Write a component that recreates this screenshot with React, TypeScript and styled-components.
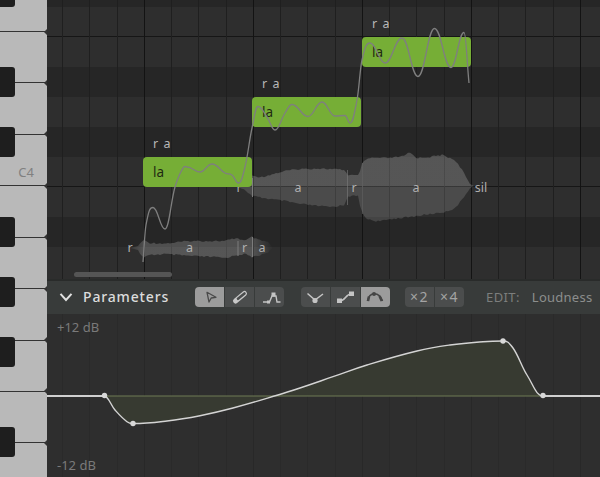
import React from "react";
import styled, { createGlobalStyle } from "styled-components";

type Pt = [number, number];

const PITCH: Pt[] = [
  [143, 262], [146, 225], [153, 207.5], [165, 229], [175, 187], [183, 168], [187, 167], [200, 172],
  [212, 164], [225, 173], [232, 175], [238.5, 183], [245, 167], [252, 128], [258, 106.5], [267, 117], [275, 130],
  [285, 113], [292, 104.5], [308, 116.5], [322, 102], [335, 116], [345, 115.5], [350, 123], [357, 100], [362, 60],
  [370, 43], [385, 63], [402, 38], [418, 76.5], [434.5, 28.5], [451, 67.5], [464, 32.5], [469, 83],
];

const LOUDNESS: Pt[] = [
  [47, 396], [104, 396], [115, 410], [127, 421.7], [133, 423.5], [167, 421], [200, 415.7], [233, 408], [278, 395],
  [300, 388], [333, 376.7], [367, 365], [417, 351], [450, 345], [483, 341.7], [503, 341], [513, 348],
  [527, 375], [543, 396], [600, 396],
];

const WAVE_LOW_TOP: Pt[] = [
  [130, 248], [138, 246], [143, 240], [150, 243], [165, 243.5], [190, 241], [215, 241], [225, 241],
  [237, 238], [245, 241], [252, 237], [258, 240], [268, 242], [273, 248],
];
const WAVE_LOW_BOTTOM: Pt[] = [
  [130, 248], [138, 250], [143, 258], [150, 255], [165, 254], [190, 256], [215, 257], [225, 258],
  [237, 255], [245, 254], [252, 257], [258, 256], [268, 252], [273, 248],
];

const WAVE_HIGH_TOP: Pt[] = [
  [238, 186], [245, 183], [250, 178], [252, 176], [262, 177], [285, 171], [300, 169], [320, 168.5],
  [345, 170], [347, 175], [358, 175.5], [360, 172], [362, 163], [370, 158], [390, 158], [405, 156],
  [409, 152], [417, 158], [430, 157], [442, 155], [455, 160], [462, 170], [470, 184], [474, 186],
];
const WAVE_HIGH_BOTTOM: Pt[] = [
  [238, 187], [245, 190], [252, 196], [270, 199], [285, 201], [300, 204], [330, 207], [345, 205],
  [347, 196], [358, 196], [360, 205], [362, 212], [365, 218], [375, 221], [382, 221], [390, 219],
  [410, 217], [430, 214], [445, 212], [455, 208], [462, 200], [470, 188], [474, 186],
];

// hermite through the points, flat on the peaks so it doesn't overshoot them
const smooth = (pts: Pt[]) => {
  const slope = (i: number) => {
    const a = pts[Math.max(i - 1, 0)];
    const b = pts[Math.min(i + 1, pts.length - 1)];
    const c = pts[i];
    if ((c[1] - a[1]) * (b[1] - c[1]) <= 0 && i > 0 && i < pts.length - 1) return 0;
    return (b[1] - a[1]) / (b[0] - a[0]);
  };
  let d = `M${pts[0][0]} ${pts[0][1]}`;
  for (let i = 0; i < pts.length - 1; i++) {
    const p = pts[i];
    const q = pts[i + 1];
    const h = (q[0] - p[0]) * 0.42;
    d += ` C${p[0] + h} ${p[1] + slope(i) * h} ${q[0] - h} ${q[1] - slope(i + 1) * h} ${q[0]} ${q[1]}`;
  }
  return d;
};

const lerpAt = (pts: Pt[], x: number) => {
  for (let i = 0; i < pts.length - 1; i++) {
    if (x <= pts[i + 1][0]) {
      const t = (x - pts[i][0]) / (pts[i + 1][0] - pts[i][0]);
      return pts[i][1] + (pts[i + 1][1] - pts[i][1]) * t;
    }
  }
  return pts[pts.length - 1][1];
};

const jag = (i: number) => {
  const v = Math.sin(i * 12.9898) * 43758.5453;
  return v - Math.floor(v) - 0.5;
};

const wavePath = (top: Pt[], bottom: Pt[]) => {
  const start = top[0][0];
  const end = top[top.length - 1][0];
  const up: string[] = [];
  const down: string[] = [];
  let i = 0;
  for (let x = start; x <= end; x += 2, i++) {
    const amp = Math.min(1, (lerpAt(bottom, x) - lerpAt(top, x)) / 10);
    up.push(`${x} ${(lerpAt(top, x) + jag(i) * 1.6 * amp).toFixed(1)}`);
    down.unshift(`${x} ${(lerpAt(bottom, x) + jag(i + 40) * 1.6 * amp).toFixed(1)}`);
  }
  return `M${up.join(" L")} L${down.join(" L")} Z`;
};

const ROWS = [
  { h: 7, dark: true },
  { h: 30, line: true },
  { h: 30 },
  { h: 30, dark: true },
  { h: 30 },
  { h: 30, dark: true },
  { h: 30, line: true },
  { h: 30 },
  { h: 30, dark: true },
  { h: 32 },
];

const BEATS = Array.from({ length: 20 }, (_, i) => i);

const BeatGrid: React.FC<{ $beat: string; $bar: string }> = ({ $beat, $bar }) => (
  <GridLayer>
    {BEATS.map((i) => (
      <Beat key={i} $color={i % 4 === 3 ? $bar : $beat} />
    ))}
  </GridLayer>
);

const App: React.FC = () => {
  return (
    <Page>
      <GlobalStyle />
      <Piano>
        <WhiteKey $short />
        <WhiteKey />
        <WhiteKey />
        <WhiteKey>
          <KeyName>C4</KeyName>
        </WhiteKey>
        <WhiteKey />
        <WhiteKey />
        <WhiteKey />
        <WhiteKey />
        <WhiteKey />
        <BlackKey $top={-23} />
        <BlackKey $top={67} />
        <BlackKey $top={127} />
        <BlackKey $top={217} />
        <BlackKey $top={277} />
        <BlackKey $top={337} />
        <BlackKey $top={427} />
      </Piano>
      <Main>
        <Roll>
          {ROWS.map((r, i) => (
            <Row key={i} $h={r.h} $dark={r.dark} $line={r.line} />
          ))}
          <BeatGrid $beat="#1f1f1f" $bar="#131313" />

          <Canvas viewBox="47 0 553 279">
            <defs>
              <linearGradient id="lowWave" gradientUnits="userSpaceOnUse" x1="130" x2="273" y1="0" y2="0">
                <stop offset="0" stopColor="#fff" stopOpacity="0.05" />
                <stop offset="0.1" stopColor="#fff" stopOpacity="0.19" />
                <stop offset="0.85" stopColor="#fff" stopOpacity="0.19" />
                <stop offset="1" stopColor="#fff" stopOpacity="0" />
              </linearGradient>
              <linearGradient id="highWave" gradientUnits="userSpaceOnUse" x1="0" x2="0" y1="150" y2="225">
                <stop offset="0" stopColor="#fff" stopOpacity="0.19" />
                <stop offset="0.48" stopColor="#fff" stopOpacity="0.19" />
                <stop offset="0.48" stopColor="#fff" stopOpacity="0.14" />
                <stop offset="1" stopColor="#fff" stopOpacity="0.14" />
              </linearGradient>
            </defs>
            <path d={wavePath(WAVE_LOW_TOP, WAVE_LOW_BOTTOM)} fill="url(#lowWave)" />
            <path d={wavePath(WAVE_HIGH_TOP, WAVE_HIGH_BOTTOM)} fill="url(#highWave)" />
            <g stroke="#7c7c7c" strokeWidth="1">
              <line x1="238" x2="238" y1="241" y2="256" />
              <line x1="252.5" x2="252.5" y1="237" y2="257" />
              <line x1="252.5" x2="252.5" y1="178" y2="197" />
              <line x1="347.5" x2="347.5" y1="170" y2="205" opacity="0.6" />
              <line x1="362.5" x2="362.5" y1="163" y2="214" opacity="0.5" />
            </g>
          </Canvas>

          <Phoneme $x={130} $y={248}>r</Phoneme>
          <Phoneme $x={189.5} $y={248}>a</Phoneme>
          <Phoneme $x={244.5} $y={248}>r</Phoneme>
          <Phoneme $x={262} $y={248}>a</Phoneme>
          <Phoneme $x={239} $y={188}>r</Phoneme>
          <Phoneme $x={298} $y={187.5}>a</Phoneme>
          <Phoneme $x={354} $y={187.5}>r</Phoneme>
          <Phoneme $x={416} $y={187.5}>a</Phoneme>
          <Phoneme $x={481} $y={187.5}>sil</Phoneme>

          <Note $x={143} $y={157}>
            <Lyric>la</Lyric>
            <Syllables>r a</Syllables>
          </Note>
          <Note $x={252} $y={97}>
            <Lyric>la</Lyric>
            <Syllables>r a</Syllables>
          </Note>
          <Note $x={362} $y={37}>
            <Lyric>la</Lyric>
            <Syllables>r a</Syllables>
          </Note>

          <Canvas viewBox="47 0 553 279">
            <path d={smooth(PITCH)} fill="none" stroke="#7f7f7f" strokeWidth="1.3" />
          </Canvas>

          <ScrollThumb />
        </Roll>

        <Toolbar>
          <Chevron viewBox="0 0 14 10">
            <path d="M1.5 1.8 7 8 12.5 1.8" fill="none" stroke="#e0e0e0" strokeWidth="2" />
          </Chevron>
          <PanelTitle>Parameters</PanelTitle>
          <ButtonGroup $width={89}>
            <ToolButton $active>
              <svg viewBox="0 0 29 20">
                <path d="M12 5.3 21 10.3 16.2 11 14 15Z" fill="none" stroke="#4a4a4a" strokeWidth="1.3" strokeLinejoin="round" />
              </svg>
            </ToolButton>
            <ToolButton>
              <svg viewBox="0 0 29 20">
                <path d="M10.5 14 19.5 6.5" stroke="#c8c8c8" strokeWidth="5" strokeLinecap="round" />
                <path d="M13 11.8 19.5 6.5" stroke="#4b4d4d" strokeWidth="2.6" strokeLinecap="round" />
              </svg>
            </ToolButton>
            <ToolButton>
              <svg viewBox="0 0 29 20">
                <path d="M8 15H14.5L17 9H21L22 15H25.5" fill="none" stroke="#c4c4c4" strokeWidth="1.4" />
                <rect x="16.5" y="5.5" width="4" height="4" fill="#c4c4c4" />
                <rect x="12" y="13.5" width="3" height="3" fill="#c4c4c4" />
              </svg>
            </ToolButton>
          </ButtonGroup>
          <ButtonGroup $width={89} $gap={17}>
            <ToolButton>
              <svg viewBox="0 0 29 20">
                <path d="M6.5 6.5 14 13 22 7" fill="none" stroke="#c4c4c4" strokeWidth="1.5" />
                <circle cx="14" cy="13.5" r="2.6" fill="#c4c4c4" />
              </svg>
            </ToolButton>
            <ToolButton>
              <svg viewBox="0 0 29 20">
                <path d="M9 14C14 14 15 7 20 7" fill="none" stroke="#c4c4c4" strokeWidth="1.6" />
                <rect x="6" y="11.5" width="5" height="4.5" fill="#c4c4c4" />
                <rect x="18" y="4.5" width="5" height="4.5" fill="#c4c4c4" />
              </svg>
            </ToolButton>
            <ToolButton $active>
              <svg viewBox="0 0 29 20">
                <path d="M6.5 14C7.5 8.5 10 6.8 13.5 6.8S19.5 8.5 21.5 14" fill="none" stroke="#454545" strokeWidth="1.5" />
                <path d="M7 14 8 9.5M20.8 14 18.5 9" stroke="#454545" strokeWidth="2.6" />
                <circle cx="13" cy="7" r="2" fill="#454545" />
              </svg>
            </ToolButton>
          </ButtonGroup>
          <ButtonGroup $width={59} $gap={15}>
            <ToolButton>
              <Multiplier>×2</Multiplier>
            </ToolButton>
            <ToolButton>
              <Multiplier>×4</Multiplier>
            </ToolButton>
          </ButtonGroup>
          <EditLabel>EDIT:</EditLabel>
          <EditValue>Loudness</EditValue>
        </Toolbar>

        <Params>
          <BeatGrid $beat="#2a2a2a" $bar="#282828" />
          <Canvas viewBox="47 314 553 163">
            <path d={`${smooth(LOUDNESS)} Z`} fill="#373a31" />
            <line x1="104" x2="543" y1="396" y2="396" stroke="#6f7a55" strokeWidth="1.2" />
            <line x1="47" x2="104" y1="396" y2="396" stroke="#c4c4c4" strokeWidth="1.8" />
            <line x1="543" x2="600" y1="396" y2="396" stroke="#c4c4c4" strokeWidth="1.8" />
            <path d={smooth(LOUDNESS)} fill="none" stroke="#d4d4d4" strokeWidth="1.4" />
            <g fill="#d8d8d8">
              <circle cx="104.5" cy="395.5" r="2.7" />
              <circle cx="133" cy="423.5" r="2.7" />
              <circle cx="503" cy="341" r="2.7" />
              <circle cx="543" cy="395.5" r="2.7" />
            </g>
          </Canvas>
          <ScaleLabel>+12 dB</ScaleLabel>
          <ScaleLabel>-12 dB</ScaleLabel>
        </Params>
      </Main>
    </Page>
  );
};

export default App;

const GlobalStyle = createGlobalStyle`
  html, body {
    margin: 0;
    background: #2e2e2e;
  }
  * {
    box-sizing: border-box;
  }
`;

const Page = styled.div`
  display: flex;
  width: 600px;
  height: 477px;
  overflow: hidden;
  font-family: "Noto Sans", "Open Sans", sans-serif;
`;

const Piano = styled.div`
  position: relative;
  display: flex;
  flex-direction: column;
  flex: 0 0 47px;
  overflow: hidden;
  background: #b9b9b9;
`;

const WhiteKey = styled.div<{ $short?: boolean }>`
  position: relative;
  display: flex;
  align-items: flex-end;
  justify-content: flex-end;
  flex: 0 0 ${(p) => (p.$short ? "32px" : "51.43px")};
  padding: 0 13px 5px 0;
  border-bottom: 1px solid #333;

  &::after {
    content: "";
    position: absolute;
    right: 0;
    bottom: -3.5px;
    border: 3px solid transparent;
    border-right-color: #333;
    border-left-width: 0;
  }
`;

const KeyName = styled.span`
  font-size: 13px;
  line-height: 16px;
  color: #808080;
`;

const BlackKey = styled.div<{ $top: number }>`
  position: absolute;
  left: 0;
  top: ${(p) => p.$top}px;
  width: 15px;
  height: 30px;
  background: #1e1e1e;
  border-radius: 0 3px 3px 0;
`;

const Main = styled.div`
  display: flex;
  flex-direction: column;
  flex: 1;
  min-width: 0;
`;

const Roll = styled.div`
  position: relative;
  display: flex;
  flex-direction: column;
  flex: 0 0 279px;
  overflow: hidden;
`;

const Row = styled.div<{ $h: number; $dark?: boolean; $line?: boolean }>`
  flex: 0 0 ${(p) => p.$h}px;
  background: ${(p) => (p.$dark ? "#262626" : "#2e2e2e")};
  border-bottom: ${(p) => (p.$line ? "1px solid #161616" : "none")};
`;

const GridLayer = styled.div`
  position: absolute;
  inset: 0;
  display: flex;
  padding-left: 15px;
  pointer-events: none;
`;

const Beat = styled.div<{ $color: string }>`
  flex: 0 0 27.25px;
  border-left: 1px solid ${(p) => p.$color};
`;

const Canvas = styled.svg`
  position: absolute;
  inset: 0;
  width: 100%;
  height: 100%;
  pointer-events: none;
`;

const Note = styled.div<{ $x: number; $y: number }>`
  position: absolute;
  left: ${(p) => p.$x - 47}px;
  top: ${(p) => p.$y}px;
  display: flex;
  align-items: center;
  width: 109px;
  height: 30px;
  padding-left: 10px;
  background: #76ae36;
  border-radius: 4px;
`;

const Lyric = styled.span`
  font-size: 13.5px;
  color: #1f2a12;
`;

const Syllables = styled.span`
  position: absolute;
  left: 10px;
  top: -22px;
  font-size: 12.5px;
  line-height: 18px;
  letter-spacing: 1px;
  color: #b8b8b8;
`;

const Phoneme = styled.span<{ $x: number; $y: number }>`
  position: absolute;
  left: ${(p) => p.$x - 47}px;
  top: ${(p) => p.$y}px;
  transform: translate(-50%, -50%);
  font-size: 12.5px;
  line-height: 16px;
  color: #b0b0b0;
`;

const ScrollThumb = styled.div`
  position: absolute;
  left: 27px;
  top: 272px;
  width: 98px;
  height: 5px;
  background: #555;
  border-radius: 3px;
`;

const Toolbar = styled.div`
  display: flex;
  align-items: center;
  flex: 0 0 35px;
  padding: 0 0 2px 12px;
  background: #383b3a;
  border-top: 2px solid #292b2a;
`;

const Chevron = styled.svg`
  flex: 0 0 14px;
  height: 10px;
`;

const PanelTitle = styled.span`
  flex: 0 0 122px;
  padding-left: 10px;
  font-size: 14px;
  font-weight: 500;
  letter-spacing: 0.85px;
  color: #dcdcdc;
`;

const ButtonGroup = styled.div<{ $width: number; $gap?: number }>`
  display: flex;
  gap: 1px;
  flex: 0 0 ${(p) => p.$width}px;
  height: 20px;
  margin-left: ${(p) => p.$gap ?? 0}px;
  border-radius: 4px;
  overflow: hidden;
`;

const ToolButton = styled.div<{ $active?: boolean }>`
  display: flex;
  align-items: center;
  justify-content: center;
  flex: 1;
  background: ${(p) => (p.$active ? "#9c9c9c" : "#4b4d4d")};

  svg {
    display: block;
    width: 29px;
    height: 20px;
  }
`;

const Multiplier = styled.span`
  font-size: 14px;
  line-height: 20px;
  letter-spacing: 1.5px;
  color: #a4a4a4;
`;

const EditLabel = styled.span`
  margin-left: 22px;
  font-size: 13px;
  letter-spacing: 0.4px;
  color: #7c7e7d;
`;

const EditValue = styled.span`
  margin-left: 12px;
  font-size: 13px;
  letter-spacing: 0.25px;
  color: #8c8e8d;
`;

const Params = styled.div`
  position: relative;
  display: flex;
  flex-direction: column;
  justify-content: space-between;
  flex: 1;
  padding: 4px 0 3px 10px;
  background: #2e2e2e;
`;

const ScaleLabel = styled.span`
  position: relative;
  font-size: 13px;
  line-height: 18px;
  color: #7a7a7a;
`;
